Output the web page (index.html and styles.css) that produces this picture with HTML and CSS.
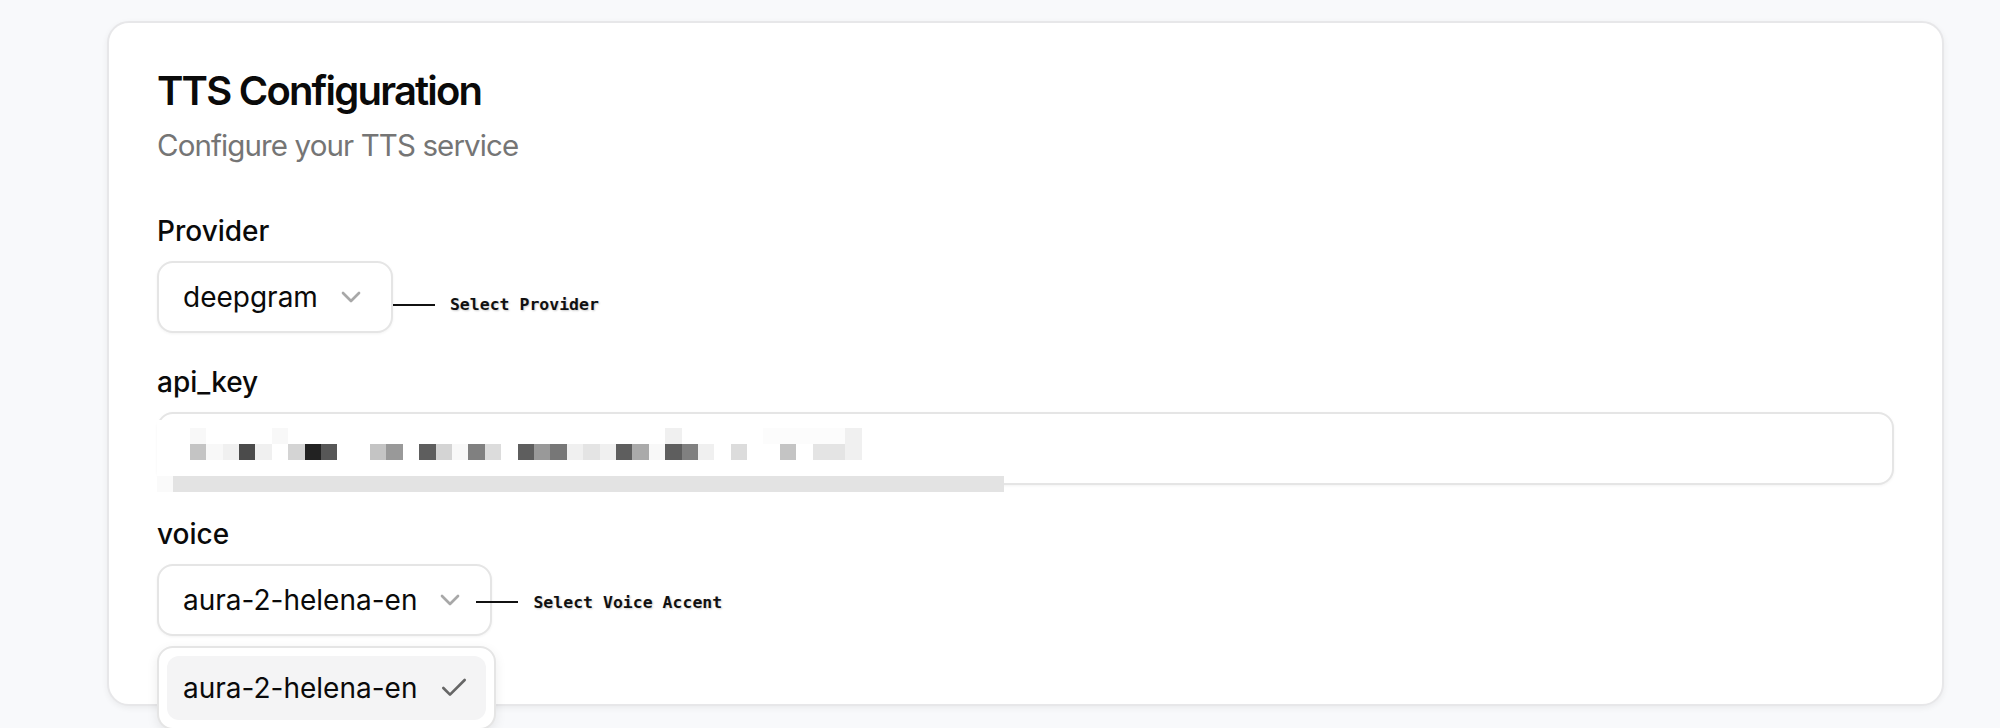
FILE: index.html
```html
<!DOCTYPE html>
<html lang="en">
<head>
    <meta charset="UTF-8">
    <meta name="viewport" content="width=device-width, initial-scale=1.0">
    <title>TTS Configuration</title>
    <link rel="stylesheet" href="styles.css">
</head>
<body>
    <div class="card">
        <div class="card-header">
            <h1 class="card-title">TTS Configuration</h1>
            <p class="card-desc">Configure your TTS service</p>
        </div>

        <div class="card-content">
            <!-- Provider -->
            <div class="field">
                <label class="field-label">Provider</label>
                <div class="select-row">
                    <button class="select-trigger" type="button">
                        <span>deepgram</span>
                        <svg class="chevron" viewBox="0 0 24 24" fill="none" stroke="currentColor" stroke-width="2" stroke-linecap="round" stroke-linejoin="round"><path d="m6 9 6 6 6-6"/></svg>
                    </button>
                    <div class="note note-provider">
                        <span class="note-line"></span>
                        <span class="note-text">Select Provider</span>
                    </div>
                </div>
            </div>

            <!-- API key (redacted) -->
            <div class="field">
                <label class="field-label">api_key</label>
                <div class="input-wrap">
                    <div class="text-input"></div>
                    <div class="mosaic">
                        <div class="mrow">
                            <i></i><i></i><i class="t1"></i><i></i><i></i><i></i><i></i><i class="t1"></i><i></i><i></i>
                            <i></i><i></i><i></i><i></i><i></i><i></i><i></i><i></i><i></i><i></i>
                            <i></i><i></i><i></i><i></i><i></i><i></i><i></i><i></i><i></i><i></i>
                            <i></i><i class="t2"></i><i></i><i></i><i></i><i></i><i></i><i class="t0"></i><i class="t0"></i><i class="t0"></i>
                            <i class="t0"></i><i class="t0"></i><i class="t2"></i>
                        </div>
                        <div class="mrow">
                            <i></i><i></i><i class="t6"></i><i class="t1"></i><i class="t2"></i><i class="t13"></i><i class="t2"></i><i></i><i class="t5"></i><i class="t14"></i>
                            <i class="t12"></i><i></i><i></i><i class="t6"></i><i class="t8"></i><i></i><i class="t11"></i><i class="t5"></i><i class="t1"></i><i class="t9"></i>
                            <i class="t4"></i><i></i><i class="t11"></i><i class="t8"></i><i class="t10"></i><i class="t2"></i><i class="t3"></i><i class="t2"></i><i class="t11"></i><i class="t7"></i>
                            <i class="t1"></i><i class="t11"></i><i class="t9"></i><i class="t2"></i><i></i><i class="t4"></i><i></i><i></i><i class="t6"></i><i></i>
                            <i class="t3"></i><i class="t3"></i><i class="t2"></i>
                        </div>
                        <div class="mrow"></div>
                        <div class="mbar"></div>
                    </div>
                </div>
            </div>

            <!-- Voice -->
            <div class="field">
                <label class="field-label">voice</label>
                <div class="select-row">
                    <button class="select-trigger" type="button">
                        <span>aura-2-helena-en</span>
                        <svg class="chevron" viewBox="0 0 24 24" fill="none" stroke="currentColor" stroke-width="2" stroke-linecap="round" stroke-linejoin="round"><path d="m6 9 6 6 6-6"/></svg>
                    </button>
                    <div class="note note-voice">
                        <span class="note-line"></span>
                        <span class="note-text">Select Voice Accent</span>
                    </div>

                    <div class="menu">
                        <div class="menu-item">
                            <span>aura-2-helena-en</span>
                            <svg class="check" viewBox="0 0 24 24" fill="none" stroke="currentColor" stroke-width="2" stroke-linecap="round" stroke-linejoin="round"><path d="M20 6 9 17l-5-5"/></svg>
                        </div>
                    </div>
                </div>
            </div>
        </div>
    </div>
</body>
</html>
```

FILE: styles.css
```css
/* Reset */
* {
    margin: 0;
    padding: 0;
    box-sizing: border-box;
}

html, body {
    height: 100%;
    overflow: hidden;
}

body {
    font-family: Inter, "Noto Sans", sans-serif;
    background: #f8f9fb;
    color: #0a0a0a;
    padding: 21px 0 0 107px;
}

/* Card */
.card {
    width: 1837px;
    height: 685px;
    background: #fff;
    border: 2px solid #e7e7e9;
    border-radius: 22px;
    box-shadow: 0 2px 6px rgba(0, 0, 0, 0.06);
    padding: 48px;
}

.card-title {
    font-size: 40px;
    font-weight: 600;
    line-height: 40px;
    letter-spacing: -0.045em;
}

.card-desc {
    margin-top: 14px;
    font-size: 29.5px;
    line-height: 40px;
    letter-spacing: -0.03em;
    color: #757575;
}

.card-content {
    margin-top: 46px;
    display: flex;
    flex-direction: column;
    gap: 29px;
}

/* Fields */
.field-label {
    display: block;
    font-size: 28px;
    font-weight: 500;
    line-height: 40px;
    margin-bottom: 10px;
}

.select-row {
    position: relative;
    display: flex;
    align-items: center;
}

.select-trigger {
    display: inline-flex;
    align-items: center;
    gap: 17px;
    height: 72px;
    padding: 0 24px;
    background: #fff;
    border: 2px solid #e5e5e5;
    border-radius: 16px;
    box-shadow: 0 1px 3px rgba(0, 0, 0, 0.05);
    font-family: inherit;
    font-size: 28px;
    color: #0a0a0a;
}

.chevron {
    width: 32px;
    height: 32px;
    color: #0a0a0a;
    opacity: 0.35;
}

/* Annotations */
.note {
    display: flex;
    align-items: center;
    gap: 15px;
}

.note-provider {
    margin-top: 15px;
}

.note-voice {
    margin-top: 4px;
    margin-left: -16px;
}

.note-line {
    width: 42px;
    height: 2px;
    background: #111;
}

.note-text {
    font-family: "DejaVu Sans Mono", "Liberation Mono", monospace;
    font-weight: 700;
    font-size: 16.5px;
    color: #111;
    text-shadow: 1px 1px 2px rgba(0, 0, 0, 0.2);
}

/* API key input with pixelated redaction */
.input-wrap {
    position: relative;
}

.text-input {
    width: 100%;
    height: 73px;
    background: #fff;
    border: 2px solid #e5e5e5;
    border-radius: 16px;
    box-shadow: 0 1px 3px rgba(0, 0, 0, 0.05);
}

.mosaic {
    position: absolute;
    top: 8px;
    left: 0;
    width: 847px;
    padding-top: 8px;
    background: #fff;
}

.mrow {
    display: flex;
    height: 16px;
}

.mrow i {
    width: 16.4px;
    height: 16px;
    flex: none;
}

.mbar {
    height: 16px;
    background: linear-gradient(to right, #fafafa 0 16px, #e3e3e3 16px);
}

.t0 { background: #fcfcfc; }
.t1 { background: #f8f8f8; }
.t2 { background: #f0f0f0; }
.t3 { background: #e4e4e4; }
.t4 { background: #dcdcdc; }
.t5 { background: #d4d4d4; }
.t6 { background: #c4c4c4; }
.t7 { background: #aaaaaa; }
.t8 { background: #999999; }
.t9 { background: #808080; }
.t10 { background: #777777; }
.t11 { background: #5e5e5e; }
.t12 { background: #575757; }
.t13 { background: #4b4b4b; }
.t14 { background: #222222; }

/* Dropdown */
.menu {
    position: absolute;
    top: calc(100% + 10px);
    left: 0;
    width: 339px;
    padding: 8px;
    background: #fff;
    border: 2px solid #e5e5e5;
    border-radius: 16px;
    box-shadow: 0 4px 12px rgba(0, 0, 0, 0.08);
}

.menu-item {
    display: flex;
    align-items: center;
    justify-content: space-between;
    height: 64px;
    padding: 0 16px;
    background: #f4f4f5;
    border-radius: 12px;
    font-size: 28px;
}

.check {
    width: 32px;
    height: 32px;
    color: #666;
}
```
